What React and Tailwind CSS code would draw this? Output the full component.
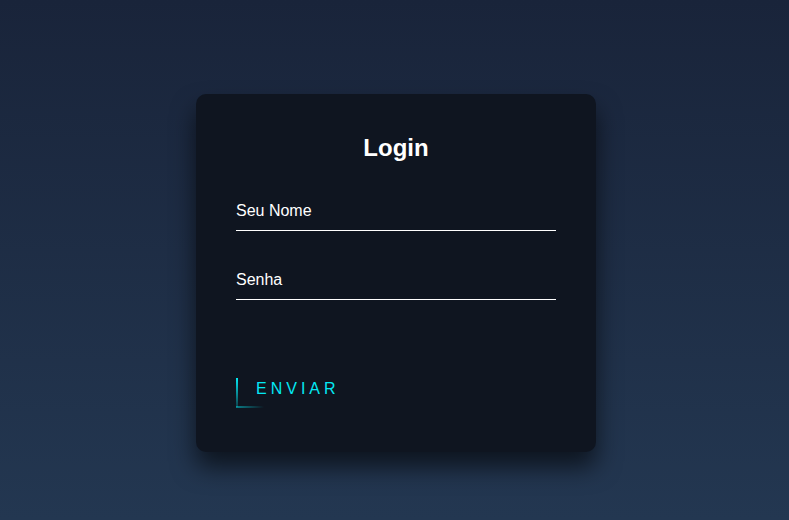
export default function App() {
  return (
    <div
      className="w-full h-[520px] overflow-hidden bg-gradient-to-b from-[#19243a] to-[#233751] pt-[94px] pl-[196px]"
      style={{ fontFamily: '"Liberation Sans", Arial, sans-serif' }}
    >
      <div className="w-[400px] h-[358px] p-[40px] rounded-[10px] bg-[#0f1520] shadow-[0_15px_25px_rgba(0,0,0,0.6)] flex flex-col">
        <h2 className="m-0 mb-[30px] text-center text-white text-[24px] font-bold leading-[28px]">Login</h2>
        <div className="mb-[30px] border-b border-white py-[10px]">
          <span className="block text-white text-[16px] leading-[18px]">Seu Nome</span>
        </div>
        <div className="mb-[30px] border-b border-white py-[10px]">
          <span className="block text-white text-[16px] leading-[18px]">Senha</span>
        </div>
        <div className="mt-[40px]">
          <a className="relative inline-block px-[20px] py-[10px] text-[#03e9f4] text-[16px] leading-[18px] tracking-[4px] uppercase no-underline">
            Enviar
            <span className="absolute left-0 top-[8px] bottom-[1px] w-[2px] bg-gradient-to-b from-[#03e9f4] to-[#03e9f4]/20"></span>
            <span className="absolute left-0 bottom-0 h-[2px] w-[28px] bg-gradient-to-r from-[#03e9f4]/50 to-transparent"></span>
          </a>
        </div>
      </div>
    </div>
  );
}
